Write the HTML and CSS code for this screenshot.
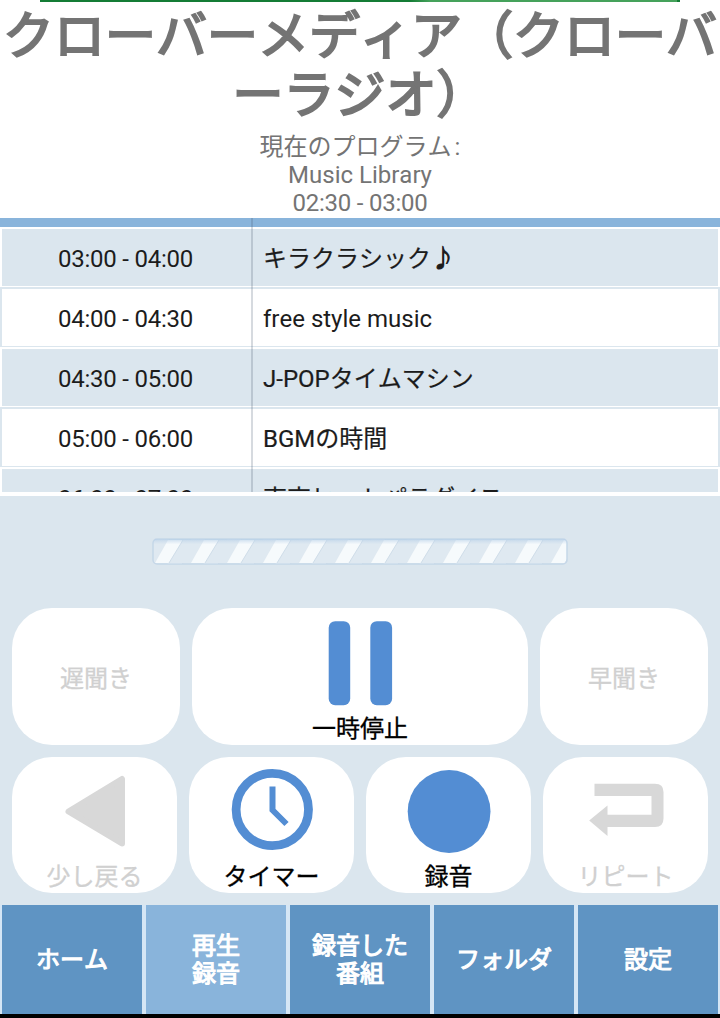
FILE: index.html
```html
<!DOCTYPE html>
<html lang="ja">
<head>
<meta charset="utf-8">
<title>クローバーラジオ</title>
<link rel="stylesheet" href="styles.css">
</head>
<body>
<div class="app">
  <div class="banner"></div>
  <header class="now">
    <h1 class="station">クローバーメディア（クローバ<br>ーラジオ）</h1>
    <p class="now-label">現在のプログラム<span class="colon">:</span></p>
    <p class="now-line">Music Library</p>
    <p class="now-line digits">02:30 - 03:00</p>
  </header>
  <main class="schedule">
    <div class="divider"></div>
    <div class="row shaded"><div class="time">03:00 - 04:00</div><div class="name">キラクラシック<span class="note">♪</span></div></div>
    <div class="row"><div class="time">04:00 - 04:30</div><div class="name latin">free style music</div></div>
    <div class="row shaded"><div class="time">04:30 - 05:00</div><div class="name">J-POPタイムマシン</div></div>
    <div class="row"><div class="time">05:00 - 06:00</div><div class="name">BGMの時間</div></div>
    <div class="row shaded"><div class="time">06:00 - 07:00</div><div class="name">東京ヒートパラダイス</div></div>
    <div class="column-line"></div>
  </main>
  <section class="player">
    <svg class="progress" width="416" height="27" viewBox="0 0 416 27">
      <defs>
        <pattern id="stripes" width="36" height="23" patternUnits="userSpaceOnUse" x="3" y="2">
          <rect width="36" height="23" fill="#dfe9f1"/>
          <path d="M0 23L13 0H28L14 23Z" fill="#f6fafc"/>
          <path d="M14 23L28 0" stroke="#cfdde9" fill="none"/>
        </pattern>
        <linearGradient id="shade" x1="0" y1="0" x2="0" y2="1">
          <stop offset="0" stop-color="#b4cee7" stop-opacity=".7"/>
          <stop offset=".22" stop-color="#c6d9ec" stop-opacity="0"/>
        </linearGradient>
      </defs>
      <rect x="1" y="1" width="414" height="25" rx="4" fill="url(#stripes)" stroke="#c5d7e8" stroke-width="1.5"/>
      <rect x="1" y="1" width="414" height="25" rx="4" fill="url(#shade)"/>
    </svg>
    <div class="controls main-controls">
      <button class="key off"><span class="label">遅聞き</span></button>
      <button class="key">
        <svg class="icon" width="120" height="100" viewBox="0 0 120 100"><rect x="28.7" y="12.2" width="21.5" height="84" rx="6.5" fill="#538dd3"/><rect x="70.3" y="12.2" width="21.8" height="84" rx="6.5" fill="#538dd3"/></svg>
        <span class="label">一時停止</span>
      </button>
      <button class="key off"><span class="label">早聞き</span></button>
    </div>
    <div class="controls sub-controls">
      <button class="key off">
        <svg class="icon" width="120" height="100" viewBox="0 0 120 100"><path d="M33.500 54.500L87 22V86.500Z" fill="#d8d8d8" stroke="#d8d8d8" stroke-width="6" stroke-linejoin="round"/></svg>
        <span class="label">少し戻る</span>
      </button>
      <button class="key">
        <svg class="icon" width="120" height="100" viewBox="0 0 120 100"><circle cx="60.300" cy="52.500" r="36.200" fill="none" stroke="#538dd3" stroke-width="8.800"/><path d="M60.500 29.500V53L74.500 67" fill="none" stroke="#538dd3" stroke-width="6"/></svg>
        <span class="label">タイマー</span>
      </button>
      <button class="key">
        <svg class="icon" width="120" height="100" viewBox="0 0 120 100"><circle cx="60.100" cy="54.500" r="41.400" fill="#538dd3"/></svg>
        <span class="label">録音</span>
      </button>
      <button class="key off">
        <svg class="icon" width="120" height="100" viewBox="0 0 120 100"><path d="M28.500 26.700H89Q97.500 26.700 97.500 35V61.500Q97.500 70 89 70H41.500V79L23.200 63.500L41.500 48.500V57.700H85.500V39H28.500Z" fill="#d8d8d8"/></svg>
        <span class="label">リピート</span>
      </button>
    </div>
  </section>
  <nav class="tabs">
    <a class="tab">ホーム</a>
    <a class="tab current">再生<br>録音</a>
    <a class="tab">録音した<br>番組</a>
    <a class="tab">フォルダ</a>
    <a class="tab">設定</a>
  </nav>
</div>
</body>
</html>
```
FILE: styles.css
```css
* { box-sizing: border-box; }
body {
  margin: 0;
  background: #000;
  font-family: Roboto, "Noto Sans CJK JP", sans-serif;
  font-size: 24px;
  font-kerning: none;
}
.app {
  display: flex;
  flex-direction: column;
  width: 720px;
  height: 1014px;
  background: #dbe6ee;
}
.banner {
  height: 2px;
  flex: none;
  background: linear-gradient(90deg, #fff 40px, #147c35 40px, #147c35 410px, #45a25b 430px, #45a25b 677px, #147c35 677px, #147c35 680px, #fff 680px);
}
.now {
  height: 216px;
  flex: none;
  padding-top: 5px;
  background: #fff;
  color: #747474;
  text-align: center;
}
.station {
  margin: 0;
  font-size: 51px;
  line-height: 59px;
  font-weight: 400;
  -webkit-text-stroke: 2.2px currentColor;
  white-space: nowrap;
}
.now-label, .now-line { margin: 0; line-height: 28px; }
.now-label { padding-top: 8px; }
.colon { margin-left: 3px; }
.digits { letter-spacing: -.23px; }
.schedule {
  position: relative;
  height: 278px;
  flex: none;
  overflow: hidden;
  background: #fff;
  border-bottom: 4px solid #fff;
}
.divider { height: 9px; background: #89b4db; }
.row {
  display: grid;
  grid-template-columns: 250px 1fr;
  height: 60px;
  padding-top: 2px;
  border: solid #dbe6ee;
  border-width: 2px 2px 1px;
  background: #fff;
  color: #1c1c1c;
  line-height: 57px;
}
.row.shaded {
  border-color: #fff;
  background: #dbe6ee;
}
.time { padding-right: 3px; text-align: center; letter-spacing: -.23px; }
.name { padding-left: 11px; -webkit-text-stroke: .2px currentColor; }
.name.latin { -webkit-text-stroke: 0; }
.note { -webkit-text-stroke: 1px currentColor; }
.column-line {
  position: absolute;
  left: 251px;
  top: 0;
  width: 2px;
  height: 100%;
  background: rgba(70, 85, 110, .22);
}
.player { flex: 1; padding: 42px 12px 0; }
.progress { display: block; margin: 0 0 43px 140px; }
.controls { display: grid; gap: 12px; }
.main-controls { grid-template-columns: 168px 336px 168px; height: 137px; }
.sub-controls { grid-template-columns: repeat(4, 165px); height: 136px; margin-top: 12px; }
.key {
  display: flex;
  flex-direction: column;
  align-items: center;
  justify-content: center;
  padding: 0;
  border: 0;
  border-radius: 40px;
  overflow: hidden;
  background: #fff;
  color: #000;
  font: inherit;
  font-kerning: none;
}
.key.off { color: #d0d0d0; }
.icon { display: block; flex: none; }
.label {
  height: 36px;
  padding-top: 3px;
  line-height: 34px;
  -webkit-text-stroke: .3px currentColor;
}
.tabs {
  display: grid;
  grid-template-columns: repeat(5, 140px);
  gap: 4px;
  height: 109px;
  flex: none;
  padding: 0 2px;
  background: #d5e6f5;
}
.tab {
  display: flex;
  align-items: center;
  justify-content: center;
  padding-top: 1px;
  background: #5f94c3;
  color: #fff;
  font-weight: 400;
  -webkit-text-stroke: 1.1px currentColor;
  line-height: 28px;
  text-align: center;
}
.tab.current { background: #89b4db; }
```
